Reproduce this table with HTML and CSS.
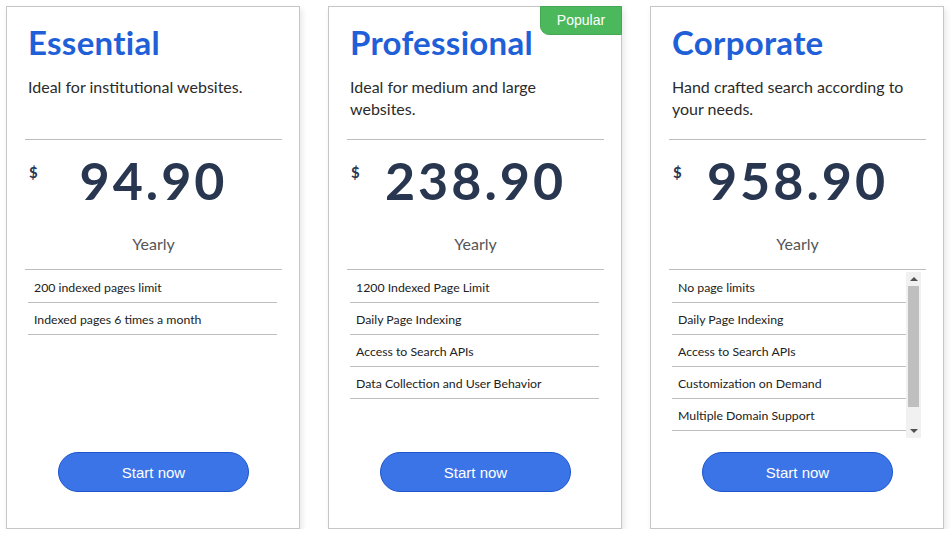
FILE: index.html
```html
<!DOCTYPE html>
<html lang="en">
<head>
<meta charset="utf-8">
<title>Pricing</title>
<link rel="stylesheet" href="styles.css">
</head>
<body>
<div class="plans">
  <div class="card">
    <div class="head">
      <h2 class="title">Essential</h2>
      <p class="desc">Ideal for institutional websites.</p>
    </div>
    <div class="pricing">
      <div class="price-row">
        <span class="cur">$</span>
        <span class="amount">94.90</span>
      </div>
      <div class="period">Yearly</div>
    </div>
    <div class="feature-box">
      <ul class="features">
        <li>200 indexed pages limit</li>
        <li>Indexed pages 6 times a month</li>
      </ul>
    </div>
    <button class="cta">Start now</button>
  </div>

  <div class="card">
    <div class="badge">Popular</div>
    <div class="head">
      <h2 class="title">Professional</h2>
      <p class="desc">Ideal for medium and large websites.</p>
    </div>
    <div class="pricing">
      <div class="price-row">
        <span class="cur">$</span>
        <span class="amount">238.90</span>
      </div>
      <div class="period">Yearly</div>
    </div>
    <div class="feature-box">
      <ul class="features">
        <li>1200 Indexed Page Limit</li>
        <li>Daily Page Indexing</li>
        <li>Access to Search APIs</li>
        <li>Data Collection and User Behavior</li>
      </ul>
    </div>
    <button class="cta">Start now</button>
  </div>

  <div class="card">
    <div class="head">
      <h2 class="title">Corporate</h2>
      <p class="desc">Hand crafted search according to your needs.</p>
    </div>
    <div class="pricing">
      <div class="price-row">
        <span class="cur">$</span>
        <span class="amount">958.90</span>
      </div>
      <div class="period">Yearly</div>
    </div>
    <div class="feature-box scrolling">
      <ul class="features">
        <li>No page limits</li>
        <li>Daily Page Indexing</li>
        <li>Access to Search APIs</li>
        <li>Customization on Demand</li>
        <li>Multiple Domain Support</li>
      </ul>
      <div class="scrollbar" aria-hidden="true">
        <span class="sb-btn"><span class="arrow-up"></span></span>
        <span class="sb-thumb"></span>
        <span class="sb-space"></span>
        <span class="sb-btn"><span class="arrow-down"></span></span>
      </div>
    </div>
    <button class="cta">Start now</button>
  </div>
</div>
</body>
</html>
```
FILE: styles.css
```css
html, body {
  margin: 0;
  padding: 0;
  background: #ffffff;
}

body {
  font-family: Lato, "Open Sans", "Liberation Sans", sans-serif;
  color: #2b2b2b;
}

.plans {
  display: flex;
  gap: 28px;
  padding: 6px 0 0 6px;
}

.card {
  position: relative;
  box-sizing: border-box;
  width: 294px;
  height: 523px;
  border: 1px solid #c6c6c6;
  background: #fff;
  box-shadow: 2px 3px 6px rgba(0, 0, 0, 0.10);
  padding: 0 17px 0 18px;
  display: flex;
  flex-direction: column;
}

.badge {
  position: absolute;
  top: -1px;
  right: -1px;
  width: 82px;
  height: 29px;
  box-sizing: border-box;
  background: #4cb85c;
  border: 1px solid #43a853;
  border-radius: 0 0 0 9px;
  color: #fff;
  font-family: "Liberation Sans", Arial, sans-serif;
  font-size: 14px;
  line-height: 27px;
  text-align: center;
}

.head {
  height: 133px;
  flex: none;
  box-sizing: border-box;
  padding: 15px 0 0 3px;
  border-bottom: 1px solid #bdbdbd;
}

.title {
  margin: 0;
  font-size: 33px;
  line-height: 40px;
  font-weight: 700;
  color: #1f60d8;
  letter-spacing: 0.3px;
}

.desc {
  margin: 14px 0 0;
  font-size: 16px;
  line-height: 22px;
  color: #2b2b2b;
  padding-right: 10px;
}

.pricing {
  height: 130px;
  flex: none;
  box-sizing: border-box;
  border-bottom: 1px solid #bdbdbd;
  padding-top: 9px;
}

.price-row {
  display: grid;
  grid-template-columns: 1fr auto 1fr;
  align-items: start;
}

.cur {
  font-size: 15px;
  font-weight: 700;
  color: #2a3550;
  padding: 14px 0 0 4px;
}

.amount {
  font-size: 52px;
  line-height: 62px;
  font-weight: 700;
  color: #283650;
  letter-spacing: 3px;
}

.period {
  margin-top: 23px;
  text-align: center;
  font-size: 16px;
  line-height: 20px;
  color: #555;
}

.feature-box {
  flex: none;
  display: flex;
  align-items: flex-start;
  margin: 1px 5px 0 3px;
  max-height: 167px;
  overflow: hidden;
}

.features {
  flex: 1;
  list-style: none;
  margin: 0;
  padding: 0;
}

.features li {
  font-size: 12.3px;
  line-height: 16px;
  padding: 9px 0 6px 6px;
  border-bottom: 1px solid #bdbdbd;
  color: #222;
}

.scrollbar {
  flex: none;
  width: 15px;
  height: 166px;
  margin-top: 1px;
  background: #f1f1f1;
  display: flex;
  flex-direction: column;
  align-items: center;
}

.sb-btn {
  height: 14px;
  width: 15px;
  display: flex;
  align-items: center;
  justify-content: center;
  flex: none;
}

.arrow-up {
  width: 0;
  height: 0;
  border-left: 4px solid transparent;
  border-right: 4px solid transparent;
  border-bottom: 4px solid #505050;
}

.arrow-down {
  width: 0;
  height: 0;
  border-left: 4px solid transparent;
  border-right: 4px solid transparent;
  border-top: 4px solid #505050;
}

.sb-thumb {
  flex: none;
  width: 11px;
  height: 121px;
  background: #bfbfbf;
}

.sb-space {
  flex: 1;
}

.cta {
  flex: none;
  margin: auto auto 36px;
  width: 191px;
  height: 40px;
  border: 1px solid #1d55cc;
  border-radius: 20px;
  background: #3b74e6;
  color: #fff;
  font-family: "Liberation Sans", Arial, sans-serif;
  font-size: 15px;
  cursor: pointer;
}
```
